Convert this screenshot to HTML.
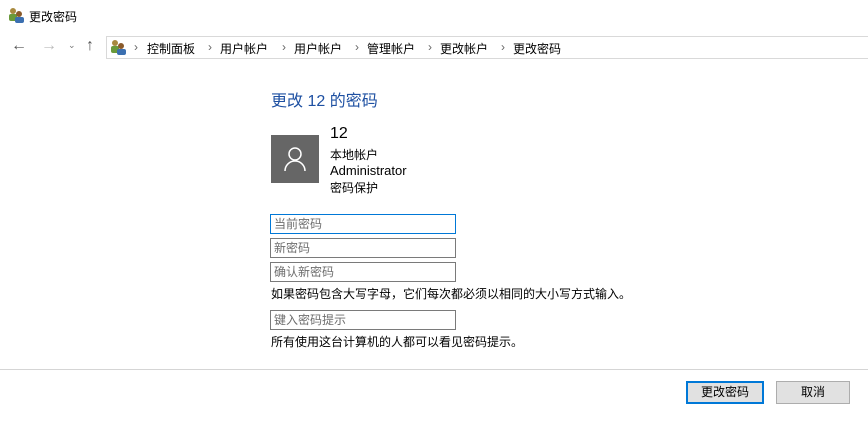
<!DOCTYPE html><html><head><style>
body{margin:0;width:868px;height:446px;background:#fff;font-family:"Liberation Sans","Noto Sans CJK SC",sans-serif;font-size:12px;color:#000;position:relative;overflow:hidden}
.a{position:absolute;white-space:nowrap}
.s{position:absolute;top:40px;color:#666}
.b{position:absolute;top:40px}
.in{position:absolute;left:270px;width:184px;height:18px;border:1px solid #7a7a7a;color:#6d6d6d;line-height:18px;text-indent:3px;font-size:12px}
.btn{position:absolute;top:381px;height:21px;background:#e1e1e1;border:1px solid #adadad;text-align:center;line-height:21px;font-size:12px}
</style></head><body>
<svg class="a" style="left:8px;top:7px" width="16" height="16"><circle cx="5" cy="4" r="3" fill="#a8893e"/><rect x="1" y="7" width="8" height="7" rx="2" fill="#6a9a3a"/><circle cx="11" cy="7" r="3" fill="#8a5a2a"/><rect x="7" y="10" width="9" height="6" rx="2" fill="#3b6fb0"/></svg>
<div class="a" style="left:29px;top:8px">更改密码</div>
<div class="a" style="left:11px;top:37px;color:#555;font-size:16px">←</div>
<div class="a" style="left:41px;top:37px;color:#bbb;font-size:16px">→</div>
<div class="a" style="left:68px;top:40px;color:#777;font-size:9px">⌄</div>
<div class="a" style="left:86px;top:37px;color:#555;font-size:16px">↑</div>
<div class="a" style="left:106px;top:36px;width:770px;height:21px;border:1px solid #d9d9d9"></div>
<svg class="a" style="left:110px;top:39px" width="16" height="16"><circle cx="5" cy="4" r="3" fill="#a8893e"/><rect x="1" y="7" width="8" height="7" rx="2" fill="#6a9a3a"/><circle cx="11" cy="7" r="3" fill="#8a5a2a"/><rect x="7" y="10" width="9" height="6" rx="2" fill="#3b6fb0"/></svg>
<span class="s" style="left:134px">›</span><span class="b" style="left:147px">控制面板</span>
<span class="s" style="left:208px">›</span><span class="b" style="left:220px">用户帐户</span>
<span class="s" style="left:282px">›</span><span class="b" style="left:294px">用户帐户</span>
<span class="s" style="left:355px">›</span><span class="b" style="left:367px">管理帐户</span>
<span class="s" style="left:428px">›</span><span class="b" style="left:440px">更改帐户</span>
<span class="s" style="left:501px">›</span><span class="b" style="left:513px">更改密码</span>
<div class="a" style="left:271px;top:87px;color:#1e50a2;font-size:16px">更改 12 的密码</div>
<div class="a" style="left:271px;top:135px;width:48px;height:48px;background:#666"></div>
<svg class="a" style="left:283px;top:146px" width="24" height="26"><circle cx="12" cy="8" r="6" fill="none" stroke="#fff" stroke-width="1.5"/><path d="M2 25a10 10 0 0 1 20 0" fill="none" stroke="#fff" stroke-width="1.5"/></svg>
<div class="a" style="left:330px;top:125px;font-size:16px">12</div>
<div class="a" style="left:330px;top:146px">本地帐户</div>
<div class="a" style="left:330px;top:163px;font-size:13px">Administrator</div>
<div class="a" style="left:330px;top:179px">密码保护</div>
<div class="in" style="top:214px;border-color:#0078d7">当前密码</div>
<div class="in" style="top:238px">新密码</div>
<div class="in" style="top:262px">确认新密码</div>
<div class="a" style="left:271px;top:285px">如果密码包含大写字母，它们每次都必须以相同的大小写方式输入。</div>
<div class="in" style="top:310px">键入密码提示</div>
<div class="a" style="left:271px;top:333px">所有使用这台计算机的人都可以看见密码提示。</div>
<div class="a" style="left:0;top:369px;width:868px;height:1px;background:#d5d5d5"></div>
<div class="btn" style="left:686px;width:74px;border:2px solid #0078d7;height:19px;line-height:19px">更改密码</div>
<div class="btn" style="left:776px;width:72px">取消</div>
</body></html>
